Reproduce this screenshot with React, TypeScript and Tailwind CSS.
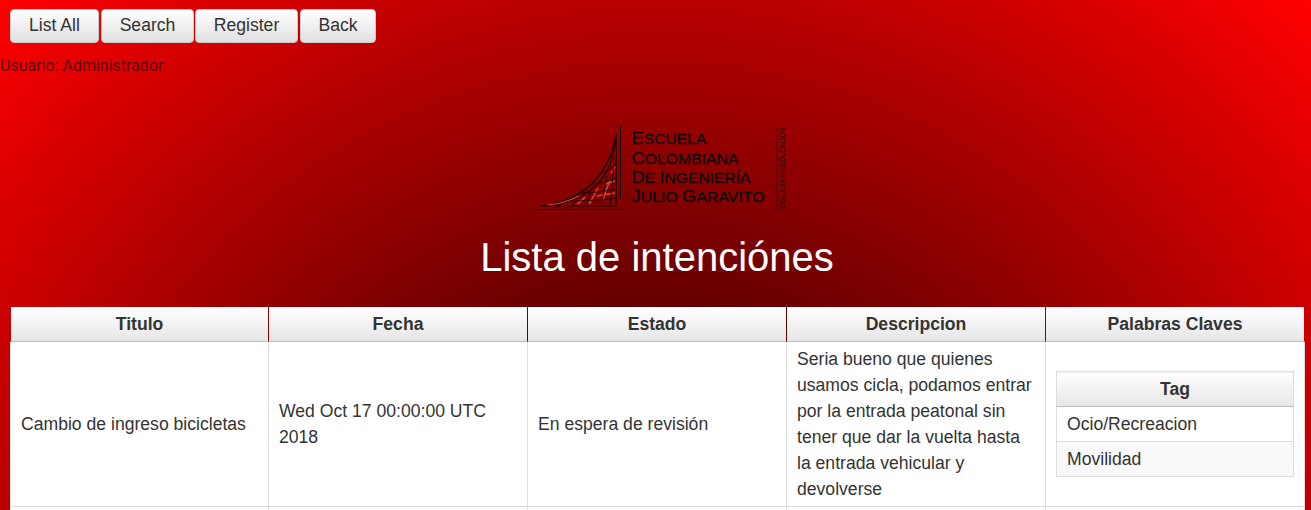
const sans = "font-['Liberation_Sans',Arial,sans-serif]";

function NavButton({ label, className }: { label: string; className: string }) {
  return (
    <button
      className={`h-[34px] rounded-[4px] border border-[#ccc] bg-gradient-to-b from-white to-[#e0e0e0] pb-[1px] text-[17.6px] leading-none text-[#333] ${className}`}
    >
      {label}
    </button>
  );
}

// big first letter, small caps after it, same as the printed logo
function LogoLine({ y, width, parts }: { y: number; width: number; parts: [string, string][] }) {
  return (
    <text x="632.5" y={y} textLength={width} lengthAdjust="spacingAndGlyphs">
      {parts.map(([big, small]) => (
        <tspan key={big + small}>
          <tspan fontSize="17">{big}</tspan>
          <tspan fontSize="14.5">{small}</tspan>
        </tspan>
      ))}
    </text>
  );
}

function Logo() {
  const darkLines = [
    "M601.7 173 C608 170 613 166 617.3 162",
    "M593 183 C602 182 610 180 617.3 177",
    "M583 192 C595 192 606 190 617.3 188",
    "M570 200 C585 200 602 199 617.3 197",
    "M553 205 L617 205",
    "M573 205 C575 201 577 198 580 195",
    "M588 205 C589 199 591 193 593 187",
    "M602 205 C604 195 606 185 608 175",
    "M611 205 C613 190 614 172 615 157",
    "M617.3 205 L617.3 133",
  ];
  const redLines = [
    "M590 203 C593 198 596 193 599 187",
    "M604 199 C606 192 608 186 611 180",
    "M598 195 C604 194 610 193 616 192",
    "M606 183 C610 182 613 181 616 180",
    "M560 203 C566 202 572 200 578 198",
    "M612 172 C614 170 615 168 616 166",
    "M578 203 C581 201 584 199 586 196",
  ];
  return (
    <svg width="256" height="90" viewBox="532 122 256 90" className="block">
      <line x1="534" y1="208.5" x2="626" y2="208.5" stroke="#0c0202" />
      <line x1="621.5" y1="125" x2="621.5" y2="198" stroke="#0c0202" />
      {redLines.map((d) => (
        <path key={d} d={d} fill="none" stroke="#d94040" strokeWidth="1.6" />
      ))}
      {darkLines.map((d) => (
        <path key={d} d={d} fill="none" stroke="#1a0404" strokeWidth="0.9" />
      ))}
      <path d="M543 205 C572 202 596 186 608 162 C613 152 616 142 617.3 133" fill="none" stroke="#0c0202" strokeWidth="1.3" />
      <path d="M543 205 C578 204 604 186 612 160 C615 150 617 142 617.3 133" fill="none" stroke="#1a0404" strokeWidth="1.3" />
      <path d="M548 204 C562 203 572 199 580 195" fill="none" stroke="#d94040" strokeWidth="1.2" />
      <g fill="#0c0c0c" stroke="#0c0c0c" strokeWidth="0.3" fontFamily="'Liberation Sans', Arial, sans-serif">
        <LogoLine y={143} width={75} parts={[["E", "SCUELA"]]} />
        <LogoLine y={162.5} width={107} parts={[["C", "OLOMBIANA"]]} />
        <LogoLine y={182} width={119} parts={[["D", "E "], ["I", "NGENIERÍA"]]} />
        <LogoLine y={201} width={133} parts={[["J", "ULIO "], ["G", "ARAVITO"]]} />
      </g>
      <line x1="778" y1="126" x2="778" y2="208" stroke="#400" />
      <text
        transform="translate(786 208) rotate(-90) scale(0.716 1)"
        fill="#111"
        fontFamily="'Liberation Sans', Arial, sans-serif"
        fontSize="9"
      >
        VIGILADA MINEDUCACIÓN
      </text>
    </svg>
  );
}

function TagTable() {
  return (
    <table className="w-full border-collapse border border-[#ddd]">
      <thead>
        <tr>
          <th className="h-[35px] border-b border-b-[#bbb] bg-gradient-to-b from-white to-[#e6e6e6] p-0 text-center text-[17.6px] font-bold text-[#333]">
            Tag
          </th>
        </tr>
      </thead>
      <tbody>
        <tr>
          <td className="h-[35px] border-b border-[#ddd] bg-white px-[10px] py-0 text-[17.6px] text-[#333]">
            Ocio/Recreacion
          </td>
        </tr>
        <tr>
          <td className="h-[35px] bg-[#f9f9f9] px-[10px] py-0 text-[17.6px] text-[#333]">Movilidad</td>
        </tr>
      </tbody>
    </table>
  );
}

const headers = ["Titulo", "Fecha", "Estado", "Descripcion", "Palabras Claves"];

export default function App() {
  const cell = "border-b border-l border-[#ddd] px-[10px] py-[4px] align-middle text-[17.6px] leading-[26px] text-[#333]";
  return (
    <div
      className={`h-[510px] overflow-hidden bg-[radial-gradient(ellipse_926px_879px_at_655px_621px,#100000,#ff0000)] ${sans}`}
    >
      <div className="flex gap-[2px] pl-[10px] pt-[9px]">
        <NavButton label="List All" className="w-[89px]" />
        <NavButton label="Search" className="w-[93px]" />
        <NavButton label="Register" className="w-[103px] -ml-[1px]" />
        <NavButton label="Back" className="w-[76px]" />
      </div>
      <p className="mt-[12px] font-['Roboto',sans-serif] text-[16px] leading-[22px] text-[#5c0a0a]">
        Usuario: Administrador
      </p>
      <div className="mt-[46px] flex justify-center pl-[6px]">
        <Logo />
      </div>
      <h1 className="mt-[20px] pl-[3px] text-center text-[40px] font-normal leading-[48px] text-white">
        Lista de intenciónes
      </h1>
      <div className="mt-[26px] pl-[10px] pr-[6px]">
        <table className="w-full table-fixed border-separate border-spacing-0">
          <thead>
            <tr>
              {headers.map((h, i) => (
                <th
                  key={h}
                  className={`h-[35px] border-b border-l border-b-[#bbb] border-l-transparent bg-gradient-to-b from-white to-[#e6e6e6] bg-clip-padding p-0 text-center text-[17.6px] font-bold text-[#333] ${
                    i === 0 ? "w-[258px]" : i === 4 ? "w-[260px] border-r border-r-transparent" : "w-[259px]"
                  }`}
                >
                  {h}
                </th>
              ))}
            </tr>
          </thead>
          <tbody>
            <tr className="bg-white">
              <td className={cell}>Cambio de ingreso bicicletas</td>
              <td className={cell}>Wed Oct 17 00:00:00 UTC 2018</td>
              <td className={cell}>En espera de revisión</td>
              <td className={cell}>
                Seria bueno que quienes usamos cicla, podamos entrar por la entrada peatonal sin tener que dar la vuelta
                hasta la entrada vehicular y devolverse
              </td>
              <td className={`${cell} border-r`}>
                <TagTable />
              </td>
            </tr>
            <tr className="bg-white">
              <td className={cell}>&nbsp;</td>
              <td className={cell}>&nbsp;</td>
              <td className={cell}>&nbsp;</td>
              <td className={cell}>&nbsp;</td>
              <td className={`${cell} border-r`}>&nbsp;</td>
            </tr>
          </tbody>
        </table>
      </div>
    </div>
  );
}
